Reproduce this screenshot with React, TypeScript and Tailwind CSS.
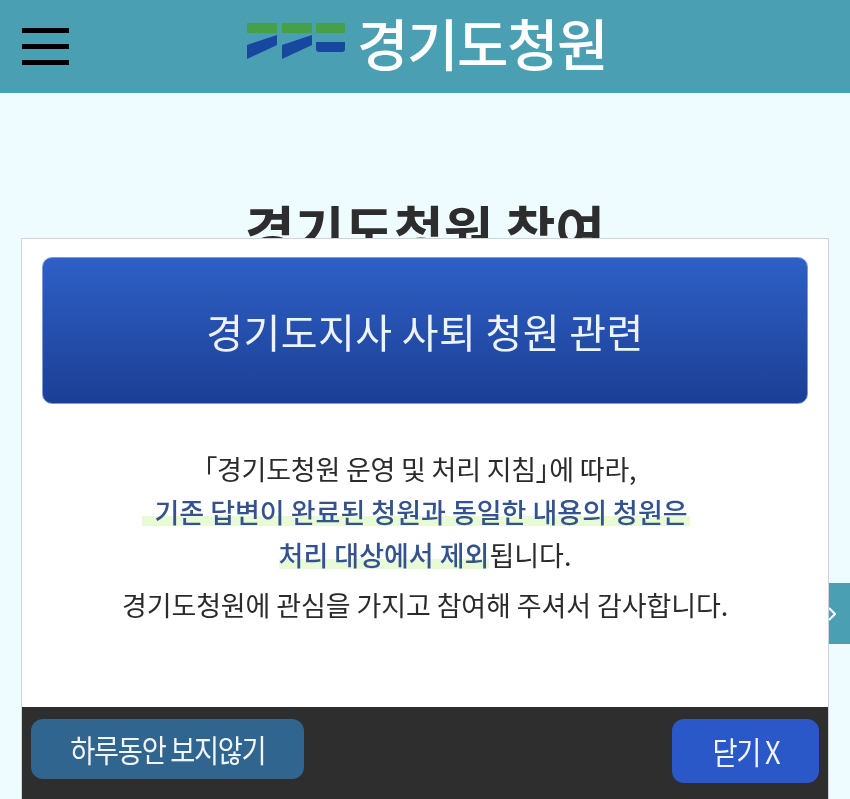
const FONT = "font-['Noto_Sans_CJK_KR','Noto_Sans',sans-serif]";

function Logo() {
  return (
    <svg width="100" height="38" viewBox="0 0 100 38" className="shrink-0" aria-hidden="true">
      <rect x="0" y="0" width="30" height="10" fill="#45a047" />
      <rect x="35" y="0" width="30" height="10" fill="#45a047" />
      <rect x="69" y="0" width="29" height="10" fill="#45a047" />
      <path d="M0 22 30 12V22L0 36Z" fill="#17479e" />
      <path d="M35 22 65 12V22L35 36Z" fill="#17479e" />
      <path d="M69 19H98V26Q98 29 95 29H72Q69 29 69 26Z" fill="#17479e" />
    </svg>
  );
}

function Mark({ children, className = "" }: { children: React.ReactNode; className?: string }) {
  return (
    <span className={`bg-[linear-gradient(to_bottom,transparent_62%,#e8fbd6_62%,#e8fbd6_86%,transparent_86%)] font-medium text-[#33528f] ${className}`}>
      {children}
    </span>
  );
}

export default function App() {
  return (
    <div className={`relative h-[799px] w-full overflow-hidden bg-[#eefcff] blur-[0.5px] ${FONT}`}>
      <header className="flex h-[93px] items-center bg-[#4a9fb3]">
        <div className="ml-[22px] flex h-[37px] w-[47px] flex-col justify-between">
          <span className="h-[5px] bg-black" />
          <span className="h-[5px] bg-black" />
          <span className="h-[5px] bg-black" />
        </div>
        <div className="mb-[9px] ml-[178px] flex items-center gap-[10px]">
          <Logo />
          <span className="text-[56px] leading-none font-medium tracking-[-1.5px] text-white">경기도청원</span>
        </div>
      </header>

      <h1 className="mt-[104px] text-center text-[54px] leading-[1.2] font-bold text-[#2d2d2d]">경기도청원 참여</h1>

      <div className="absolute top-[583px] right-0 flex h-[61px] w-[21px] items-center bg-[#4a9fb3]">
        <svg width="8" height="14" viewBox="0 0 8 14" className="ml-[-1px]" aria-hidden="true">
          <path d="M1 1 7 7 1 13" fill="none" stroke="#fff" strokeWidth="2" />
        </svg>
      </div>

      <div className="absolute top-[238px] left-[21px] flex h-[561px] w-[808px] flex-col border border-b-0 border-[#cfd3d6] bg-white">
        <div className="flex-1 px-5 pt-[18px]">
          <div className="flex h-[147px] items-center justify-center rounded-[10px] border border-[#7d9bdc] bg-gradient-to-b from-[#2e60c6] to-[#1c3f95] text-[40px] tracking-[0.4px] text-[#eef3fb]">
            경기도지사 사퇴 청원 관련
          </div>
          <div className="mt-[43px] flex flex-col items-center text-[27px] text-[#2b2b2b]">
            <p className="mr-[10px] leading-[43px] tracking-[-0.2px]">
              <span className="[font-feature-settings:'palt']">「</span>경기도청원 운영 및 처리 지침<span className="[font-feature-settings:'palt']">」</span>에 따라,
            </p>
            <p className="leading-[43px]">
              <Mark className="mr-[18px] pr-[2px] pl-[12px]">기존 답변이 완료된 청원과 동일한 내용의 청원은</Mark>
            </p>
            <p className="leading-[43px]"><Mark>처리 대상에서 제외</Mark>됩니다.</p>
            <p className="mt-[7px] leading-[43px] tracking-[-0.1px]">경기도청원에 관심을 가지고 참여해 주셔서 감사합니다.</p>
          </div>
        </div>
        <footer className="flex h-[92px] items-start justify-between bg-[#2e2e2e] px-[9px] pt-3">
          <button className="h-[60px] w-[273px] rounded-xl bg-[#2f658f] text-[31px] tracking-[-1.5px] text-[#f2f5f7]">
            <span className="inline-block scale-x-[0.88]">하루동안 보지않기</span>
          </button>
          <button className="h-[64px] w-[147px] rounded-xl bg-[#2a58c8] text-[31px] tracking-[-1.5px] text-[#f2f5f7]">
            <span className="inline-block scale-x-[0.88]">닫기 X</span>
          </button>
        </footer>
      </div>
    </div>
  );
}
